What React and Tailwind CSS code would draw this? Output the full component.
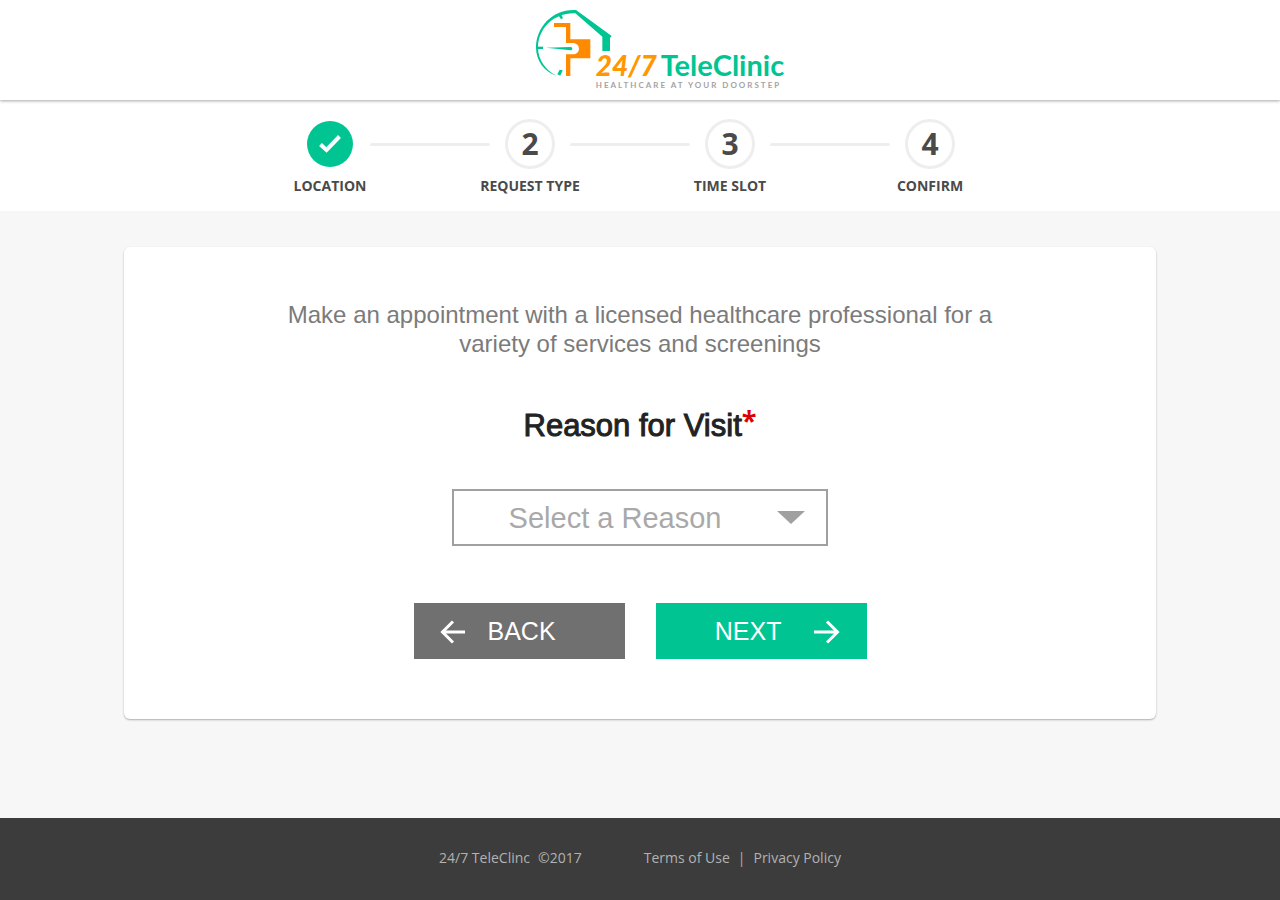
import React from "react";

const steps = [
  { number: 1, label: "LOCATION", done: true },
  { number: 2, label: "REQUEST TYPE" },
  { number: 3, label: "TIME SLOT" },
  { number: 4, label: "CONFIRM" },
];

function LogoMark() {
  return (
    <svg viewBox="18 30 180 204" className="h-[68px] w-[60px] shrink-0 overflow-visible" aria-hidden="true">
      <path
        d="M138 30 C72 25 18 78 18 143 C18 180 42 215 80 227 C46 210 24 178 24 143 C24 84 74 37 136 40 L217 110 V153 H240 V114 L245 108 Z"
        fill="#00c592"
      />
      <path d="M85 46 L93 58 L99 54 L93 42 Z" fill="#00c592" />
      <path d="M20 140 H39 V147 H20 Z" fill="#00c592" />
      <path d="M89 209 L98 211 L91 227 L82 223 Z" fill="#00c592" />
      <path d="M48 143 L122 141 A5 5 0 0 1 122 151 Z" fill="#00c592" />
      <path
        d="M72 69 H121 V118 H181 V175 H121 V228 H108 V163 H130 A17 17 0 0 0 130 129 H108 V81 H72 Z"
        fill="#ff8a00"
      />
    </svg>
  );
}

function Header() {
  return (
    <header className="relative flex h-[100px] justify-center bg-white pl-10 pt-[10px] shadow-[0_1px_3px_rgba(0,0,0,0.35)]">
      <a href="#home" className="flex h-[80px] font-['Lato',sans-serif]">
        <LogoMark />
        <span className="flex flex-col justify-end">
          <span className="flex items-baseline gap-1 whitespace-nowrap font-bold leading-[30px]">
            <span className="text-[28px] font-black italic text-[#ff9800]">24/7</span>
            <span className="text-[29px] text-[#00c592]">TeleClinic</span>
          </span>
          <span className="whitespace-nowrap text-[8px] font-bold leading-[10px] tracking-[2px] text-[#a3a3a3]">
            HEALTHCARE AT YOUR DOORSTEP
          </span>
        </span>
      </a>
    </header>
  );
}

function Step({ step }) {
  return (
    <li className="flex w-20 flex-col items-center">
      <span className="flex h-[50px] items-center justify-center">
        {step.done ? (
          <span className="flex size-[46px] items-center justify-center rounded-full bg-[#00c592]">
            <svg viewBox="0 0 24 20" className="h-5 w-6" fill="none" stroke="#fff" strokeWidth="4" aria-hidden="true">
              <path d="M2.5 10.5 L8.5 16 L21.5 2.5" />
            </svg>
          </span>
        ) : (
          <span className="flex size-[50px] items-center justify-center rounded-full border-3 border-[#eeeeee] text-[30px] font-bold leading-none">
            {step.number}
          </span>
        )}
      </span>
      <span className="mt-[7px] whitespace-nowrap text-sm font-bold">{step.label}</span>
    </li>
  );
}

function Steps() {
  return (
    <nav aria-label="Progress" className="bg-white pb-[15px] pr-5 pt-[19px] font-['Open_Sans',sans-serif] text-[#4a4a4a]">
      <ol className="mx-auto flex justify-center">
        {steps.map((step, i) => (
          <React.Fragment key={step.number}>
            {i > 0 && <li aria-hidden="true" className="mt-6 h-[3px] w-[120px] rounded-full bg-[#eeeeee]" />}
            <Step step={step} />
          </React.Fragment>
        ))}
      </ol>
    </nav>
  );
}

function Arrow({ back }) {
  return (
    <svg viewBox="0 0 26 24" className="h-6 w-[26px]" fill="none" stroke="#fff" strokeWidth="3" aria-hidden="true">
      {back ? <path d="M13 1.5 L2.5 12 L13 22.5 M2 12 H25" /> : <path d="M13 1.5 L23.5 12 L13 22.5 M24 12 H0" />}
    </svg>
  );
}

export default function App() {
  return (
    <div className="flex min-h-screen flex-col bg-[#f7f7f7] font-['Liberation_Sans',Arial,sans-serif]">
      <Header />
      <Steps />
      <main className="flex-1 px-6 pb-[99px] pt-9">
        <form
          onSubmit={(e) => e.preventDefault()}
          className="mx-auto flex max-w-[1032px] flex-col items-center rounded-md bg-white px-10 pb-[60px] pt-[53px] shadow-[0_1px_2px_rgba(0,0,0,0.3)]"
        >
          <p className="max-w-[760px] text-center text-2xl leading-[29px] text-[#7b7b7b]">
            Make an appointment with a licensed healthcare professional for a variety of services and screenings
          </p>
          <label
            htmlFor="reason"
            className="mt-12 flex items-start text-[31px] leading-[40px] text-[#222222]"
          >
            <span className="[-webkit-text-stroke:1px_#222222]">Reason for Visit</span>
            <span className="font-['Open_Sans',sans-serif] text-[27px] font-bold leading-[28px] text-[#dd0000]">*</span>
          </label>
          <div className="relative mt-[43px] w-full max-w-[376px]">
            <select
              id="reason"
              defaultValue=""
              className="block h-[57px] w-full appearance-none rounded-none border-2 border-[#a0a0a0] bg-white pr-[50px] text-[29px] leading-[40px] text-[#a9a9a9] [text-align-last:center]"
            >
              <option value="">Select a Reason</option>
            </select>
            <svg
              viewBox="0 0 28 13"
              className="pointer-events-none absolute right-[23px] top-[22px] h-[13px] w-7"
              aria-hidden="true"
            >
              <path d="M0 0 H28 L14 13 Z" fill="#a0a0a0" />
            </svg>
          </div>
          <div className="mt-[57px] flex flex-wrap gap-[31px]">
            <button type="button" className="flex h-14 w-[211px] items-center gap-[22px] bg-[#707070] pl-[26px] pt-[2px] text-[25px] text-white">
              <Arrow back />
              BACK
            </button>
            <button
              type="submit"
              className="flex h-14 w-[211px] items-center justify-end gap-[32px] bg-[#00c592] pr-[27px] pt-[2px] text-[25px] text-white"
            >
              NEXT
              <Arrow />
            </button>
          </div>
        </form>
      </main>
      <footer className="flex h-[82px] flex-wrap items-center justify-center gap-x-[62px] bg-[#3c3c3c] pb-[2px] font-['Open_Sans',sans-serif] text-sm text-[#b2b2b2]">
        <p className="flex gap-2">
          <span>24/7 TeleClinc</span>
          <span>©2017</span>
        </p>
        <p className="flex gap-2">
          <a href="#terms">Terms of Use</a>
          <span>|</span>
          <a href="#privacy">Privacy Policy</a>
        </p>
      </footer>
    </div>
  );
}
